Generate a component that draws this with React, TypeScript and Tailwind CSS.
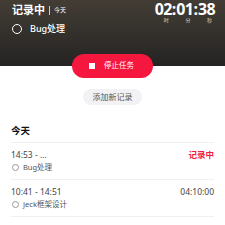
import React from "react";

const records = [
  { id: 1, range: "14:53 - ...", task: "Bug处理", status: "记录中", live: true },
  { id: 2, range: "10:41 - 14:51", task: "Jeck框架设计", status: "04:10:00", live: false },
];

function TimeUnit({ value, label }: { value: string; label: string }) {
  return (
    <div className="flex flex-col items-end">
      <span className="text-[16px] font-bold leading-[16px] tracking-[-0.6px] text-white">{value}</span>
      <span className="mr-[3px] text-[5px] leading-[6px] text-[#d8d4cc]">{label}</span>
    </div>
  );
}

export default function App() {
  return (
    <div
      className="w-[225px] h-[225px] overflow-hidden bg-white"
      style={{ fontFamily: '"Noto Sans", "Noto Sans CJK SC", sans-serif' }}
    >
      <div className="h-[66px] bg-gradient-to-b from-[#433d35] to-[#252423] pl-3 pr-[10px] pt-[3px]">
        <div className="flex items-start justify-between">
          <div className="flex flex-col">
            <div className="flex items-center">
              <span className="text-[11px] font-bold leading-[14px] text-white">记录中</span>
              <span className="mx-[4px] h-[9px] w-px bg-[#cfcac2]" />
              <span className="text-[6px] leading-[8px] text-white">今天</span>
            </div>
            <div className="mt-[6px] flex items-center gap-[8px]">
              <span className="h-[10px] w-[10px] rounded-full border-[1.5px] border-white" />
              <span className="text-[9px] font-medium leading-[12px] text-white">Bug处理</span>
            </div>
          </div>
          <div className="-mt-[2px] flex items-start">
            <TimeUnit value="02" label="时" />
            <span className="text-[16px] font-bold leading-[16px] text-white">:</span>
            <TimeUnit value="01" label="分" />
            <span className="text-[16px] font-bold leading-[16px] text-white">:</span>
            <TimeUnit value="38" label="秒" />
          </div>
        </div>
      </div>

      <div className="-mt-[12px] flex justify-center">
        <button className="flex h-[24px] w-[81px] items-center justify-center gap-[9px] rounded-full bg-[#f5173d] pr-[2px]">
          <span className="h-[6px] w-[6px] bg-white" />
          <span className="text-[7.5px] leading-none text-white">停止任务</span>
        </button>
      </div>

      <div className="mt-[11px] flex justify-center">
        <button className="h-[16px] w-[59px] rounded-full bg-[#f2f2f4] text-[8px] leading-none text-[#555]">
          添加新记录
        </button>
      </div>

      <div className="px-[11px] pt-[19px]">
        <div className="border-b border-[#f0f0f0] pb-[5px] text-[9.5px] font-bold leading-[13px] text-[#111]">今天</div>
        {records.map((r) => (
          <div key={r.id} className="border-b border-[#f0f0f0] pt-[6px] pb-[6px]">
            <div className="flex items-center justify-between">
              <span className="text-[8.5px] leading-[12px] text-[#444]">{r.range}</span>
              <span
                className={
                  r.live
                    ? "text-[8.5px] font-bold leading-[12px] text-[#f5173d]"
                    : "text-[8.5px] leading-[12px] text-[#444]"
                }
              >
                {r.status}
              </span>
            </div>
            <div className="mt-[1px] flex items-center gap-[4px] pl-[1px]">
              <span className="h-[7px] w-[7px] rounded-full border border-[#999]" />
              <span className="text-[7.5px] leading-[11px] text-[#555]">{r.task}</span>
            </div>
          </div>
        ))}
      </div>
    </div>
  );
}
